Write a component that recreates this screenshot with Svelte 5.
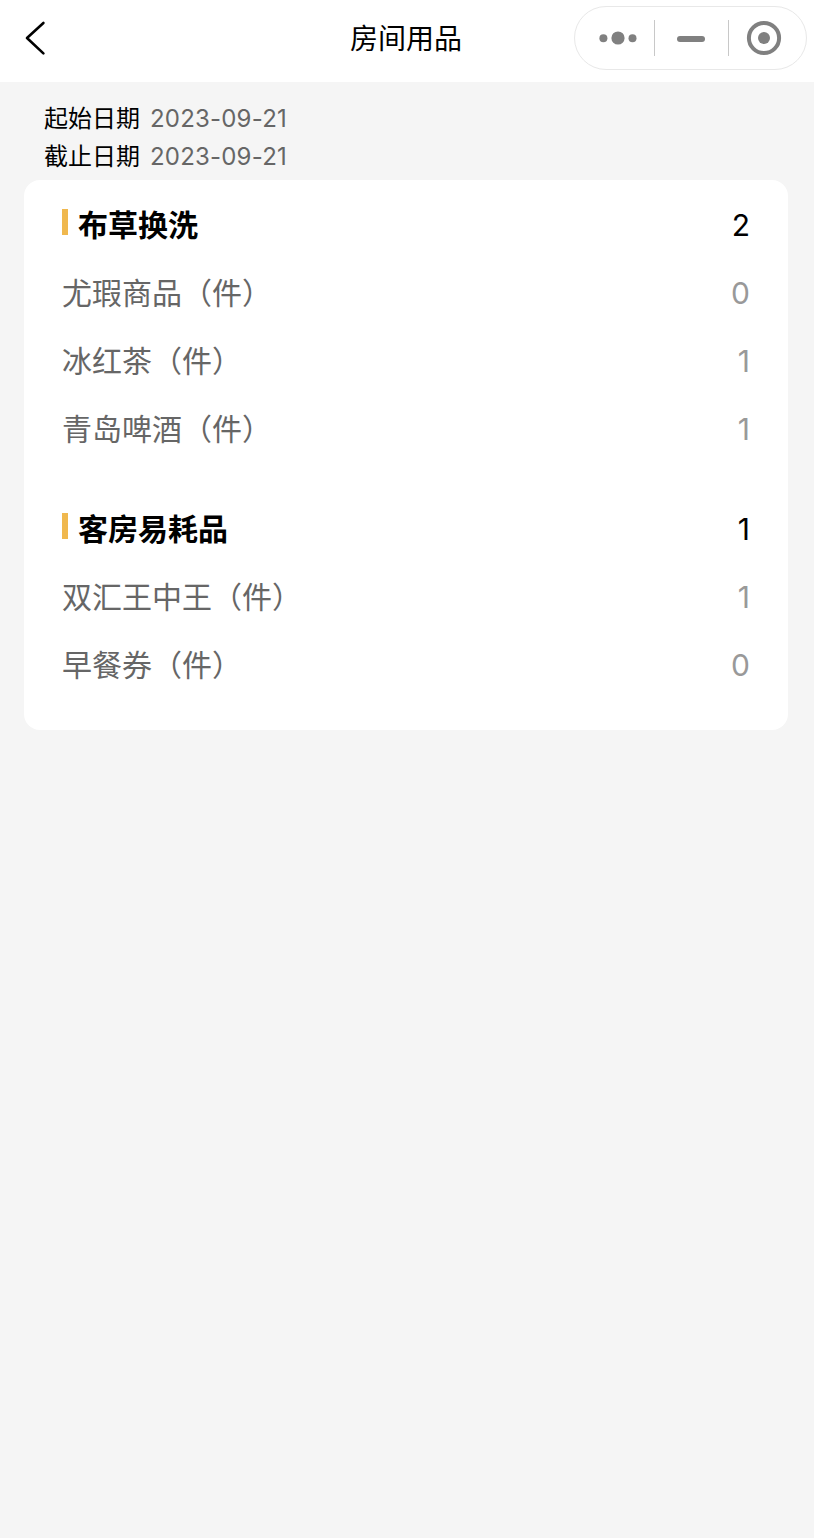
<script lang="ts">
	interface Item {
		name: string;
		count: number;
	}

	interface Group {
		title: string;
		total: number;
		items: Item[];
	}

	let start = $state('2023-09-21');
	let end = $state('2023-09-21');

	let groups: Group[] = $state([
		{
			title: '布草换洗',
			total: 2,
			items: [
				{ name: '尤瑕商品', count: 0 },
				{ name: '冰红茶', count: 1 },
				{ name: '青岛啤酒', count: 1 }
			]
		},
		{
			title: '客房易耗品',
			total: 1,
			items: [
				{ name: '双汇王中王', count: 1 },
				{ name: '早餐券', count: 0 }
			]
		}
	]);
</script>

<style>
	:global(body) {
		background: #f5f5f5;
		font-family: "Noto Sans CJK SC", sans-serif;
		color: #000;
	}
	header {
		display: grid;
		grid-template-columns: 1fr auto 1fr;
		align-items: center;
		height: 82px;
		padding: 0 7px 6px 18px;
		box-sizing: border-box;
		background: #fff;
	}
	h1 {
		margin: -2px 0 0 -13px;
		font-size: 28px;
		font-weight: 400;
		line-height: 40px;
	}
	button {
		display: block;
		padding: 0;
		border: 0;
		background: none;
	}
	svg {
		display: block;
	}
	.back {
		justify-self: start;
	}
	.capsule {
		display: flex;
		justify-self: end;
		align-items: center;
		box-sizing: border-box;
		width: 233px;
		height: 64px;
		border: 1px solid #e8e8e8;
		border-radius: 32px;
	}
	.capsule button {
		width: 74px;
	}
	.capsule button:first-child {
		width: 79px;
	}
	.capsule button + button {
		border-left: 1px solid #c8c8c8;
	}
	.dates {
		padding: 18px 44px 4px;
		font-size: 24px;
		line-height: 38px;
	}
	.date {
		display: flex;
		gap: 10px;
		height: 38px;
	}
	.date span {
		line-height: 34px;
	}
	time,
	data {
		font-family: Inter, sans-serif;
	}
	time {
		color: #666;
		letter-spacing: 0.2px;
	}
	.card {
		margin: 0 26px 0 24px;
		padding: 11px 38px 31px;
		border-radius: 16px;
		background: #fff;
		font-size: 30px;
		line-height: 68px;
	}
	section + section {
		margin-top: 32px;
	}
	.row {
		display: flex;
		justify-content: space-between;
		height: 68px;
		color: #666;
	}
	.row span,
	.row h2 {
		line-height: 64px;
	}
	.row data {
		color: #999;
	}
	.row.head,
	.row.head data {
		color: #000;
	}
	h2 {
		display: flex;
		height: 64px;
		align-items: center;
		margin: 0;
		font-size: 30px;
		font-weight: 700;
	}
	h2::before {
		content: '';
		width: 6px;
		height: 26px;
		margin: 0 10px 2px 0;
		background: #f0b84e;
	}
</style>

<header>
	<button class="back" aria-label="返回">
		<svg width="36" height="44" viewBox="0 0 36 44" fill="none" stroke="#000" stroke-width="2.6" stroke-linecap="round" stroke-linejoin="round">
			<path d="M25.4 7 9 22l16.4 15.4" />
		</svg>
	</button>
	<h1>房间用品</h1>
	<div class="capsule">
		<button aria-label="更多">
			<svg width="79" height="36" fill="#808080">
				<circle cx="28.4" cy="18.3" r="4" />
				<circle cx="43" cy="18" r="6.6" />
				<circle cx="57.5" cy="18.3" r="4" />
			</svg>
		</button>
		<button aria-label="最小化">
			<svg width="72" height="36" fill="#808080">
				<rect x="22" y="16" width="28" height="6" rx="3" />
			</svg>
		</button>
		<button aria-label="关闭">
			<svg width="72" height="36" fill="#808080">
				<circle cx="35" cy="18" r="15.1" fill="none" stroke="#808080" stroke-width="4" />
				<circle cx="35" cy="18" r="6" />
			</svg>
		</button>
	</div>
</header>

<div class="dates">
	<div class="date"><span>起始日期</span><time>{start}</time></div>
	<div class="date"><span>截止日期</span><time>{end}</time></div>
</div>

<div class="card">
	{#each groups as group}
		<section>
			<div class="row head">
				<h2>{group.title}</h2>
				<data value={group.total}>{group.total}</data>
			</div>
			{#each group.items as item}
				<div class="row">
					<span>{item.name}（件）</span>
					<data value={item.count}>{item.count}</data>
				</div>
			{/each}
		</section>
	{/each}
</div>
